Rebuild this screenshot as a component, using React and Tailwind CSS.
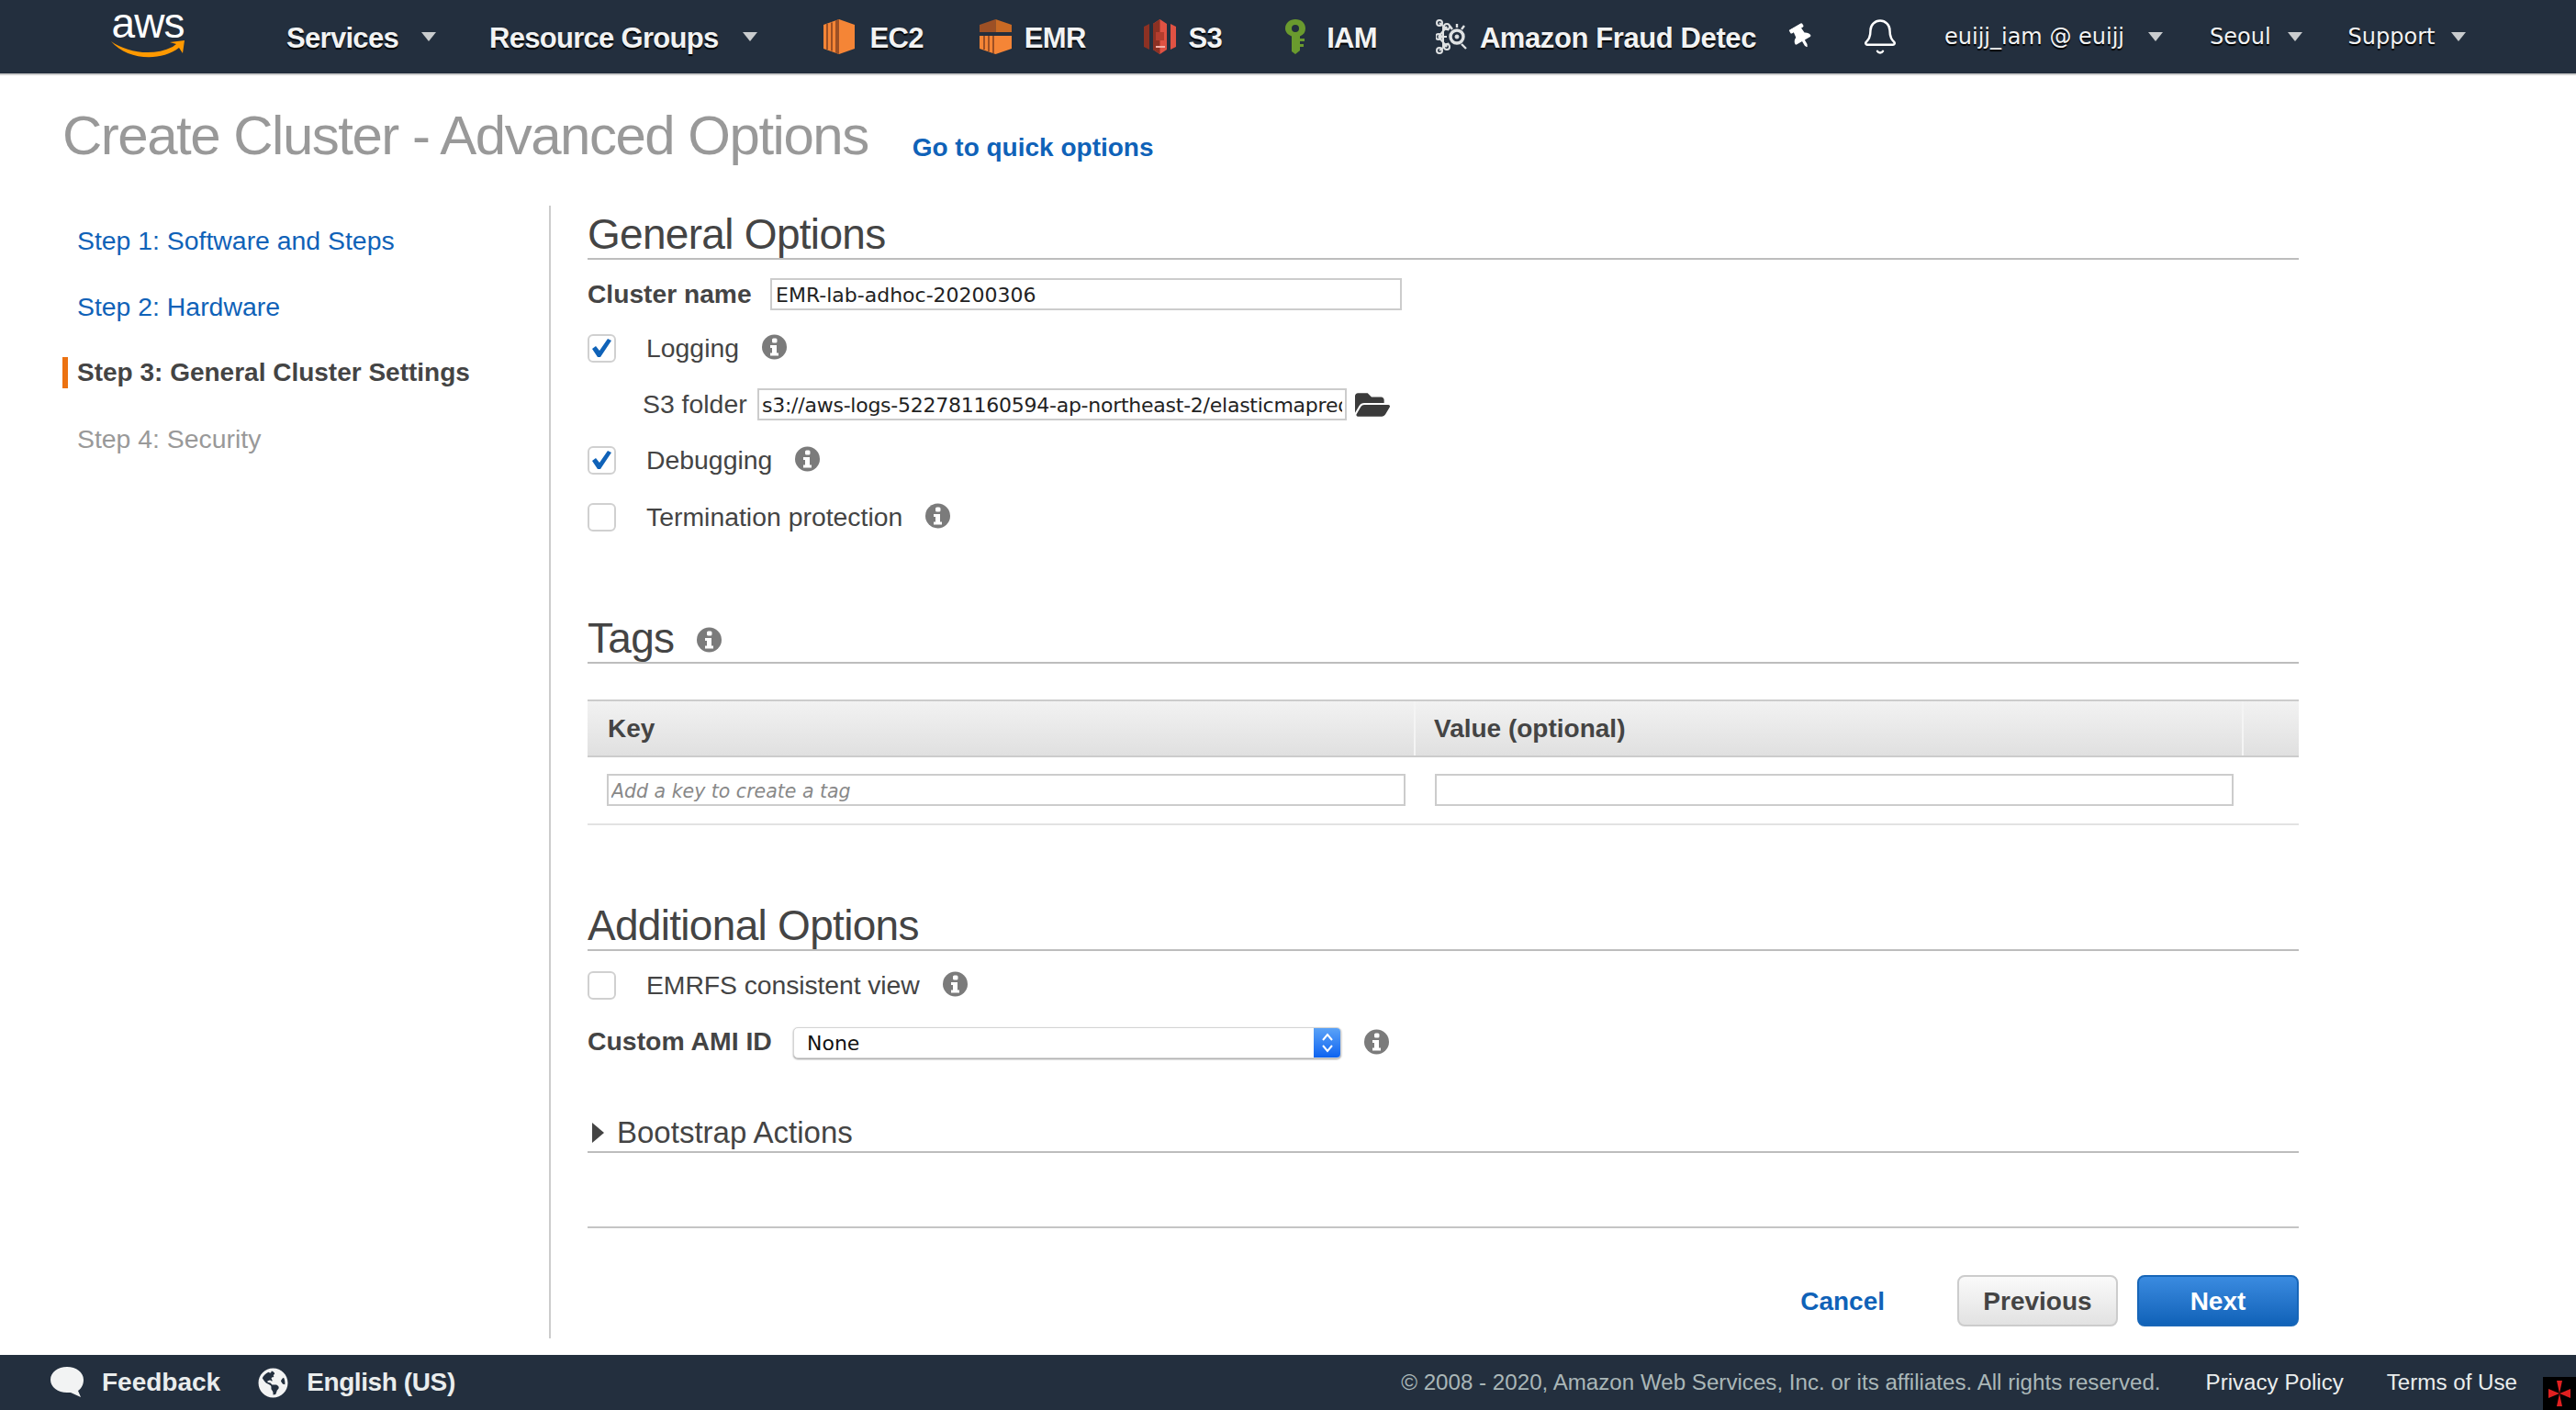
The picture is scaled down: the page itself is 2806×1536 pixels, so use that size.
import { Bell } from "lucide-react";
import { FaThumbtack, FaFolderOpen, FaGlobeAmericas } from "react-icons/fa";

const sans = "font-['Liberation_Sans',Arial,sans-serif]";
const dejavu = "font-['DejaVu_Sans',Verdana,sans-serif]";

function Caret() {
  return (
    <svg width="16" height="10" viewBox="0 0 16 10" className="shrink-0">
      <path d="M0 0 L16 0 L8 10 Z" fill="#c9ccce" />
    </svg>
  );
}

function InfoIcon({ className = "" }) {
  return (
    <svg width="27" height="28" viewBox="0 0 27 28" className={`shrink-0 ${className}`}>
      <circle cx="13.5" cy="14" r="13.5" fill="#7b7b7b" />
      <rect x="11" y="4.5" width="5.5" height="5" rx="1.5" fill="#fff" />
      <path d="M9 12 H16 V20.5 H18 V23.5 H9 V20.5 H11 V15 H9 Z" fill="#fff" />
    </svg>
  );
}

function CheckBox({ checked }) {
  return (
    <div className="w-[31px] h-[31px] shrink-0 rounded-[6px] border-2 border-[#d0d0d0] bg-white flex items-center justify-center">
      {checked ? (
        <svg width="23" height="21" viewBox="0 0 23 21">
          <path d="M1 11 L5 8 L9 13 L18 0 L22 2 L10 20 L7 20 Z" fill="#0f62b8" />
        </svg>
      ) : null}
    </div>
  );
}

function Ec2Icon() {
  return (
    <svg width="34" height="38" viewBox="0 0 34 38">
      <path d="M17 0 L34 6 V32 L17 38 L0 32 V6 Z" fill="#f58536" />
      <path d="M17 0 L13 1.5 V36.5 L17 38 Z" fill="#9d5025" />
      <path d="M3 5 H5 V33 H3 Z M8 3.5 H10 V34.5 H8 Z" fill="#9d5025" />
    </svg>
  );
}

function EmrIcon() {
  return (
    <svg width="35" height="38" viewBox="0 0 35 38">
      <path d="M17.5 0 L0 6 V14 H17.5 Z" fill="#9d5025" />
      <path d="M17.5 0 L35 6 V14 H17.5 Z" fill="#c96a24" />
      <path d="M0 18 H35 V32 L17.5 38 L0 32 Z" fill="#f58536" />
      <path d="M4 18 H6 V33 H4 Z M9 18 H11 V35 H9 Z M14 18 H16 V37 H14 Z" fill="#9d5025" />
    </svg>
  );
}

function S3Icon() {
  return (
    <svg width="35" height="38" viewBox="0 0 35 38">
      <path d="M0 8 L6 5 V33 L0 30 Z" fill="#8c3123" />
      <path d="M35 8 L29 5 V33 L35 30 Z" fill="#e05243" />
      <path d="M10 5 L17.5 0 L25 5 V33 L17.5 38 L10 33 Z" fill="#e05243" />
      <path d="M10 5 L17.5 0 V38 L10 33 Z" fill="#8c3123" />
      <rect x="13" y="14" width="9" height="9" fill="#b43d2e" />
      <rect x="13" y="29" width="10" height="2" fill="#f2b0a8" />
    </svg>
  );
}

function IamIcon() {
  return (
    <svg width="22" height="38" viewBox="0 0 22 38">
      <path
        d="M11 0 C17.5 0 22 4 22 10 C22 14 20 17 16 18.5 V21 H21 V24 H16 V27 H20 V30 H16 V34 L11 38 L7 35 V18.5 C3 17 0 14 0 10 C0 4 5 0 11 0 Z M11 6 A4 4 0 1 0 11 14 A4 4 0 1 0 11 6 Z"
        fill="#6a9a2e"
        fillRule="evenodd"
      />
    </svg>
  );
}

function FraudIcon() {
  return (
    <svg width="35" height="38" viewBox="0 0 35 38" fill="none" stroke="#dfe2e3">
      <circle cx="23" cy="19" r="7" strokeWidth="3.4" />
      <circle cx="23" cy="19" r="2" fill="#dfe2e3" strokeWidth="1" />
      <path d="M14 12 L4 4 M12 19 H3 M14 26 L4 34 M8 8 V30 M3 19 L12 8 M3 19 L12 30" strokeWidth="2" />
      <circle cx="4" cy="4" r="3" strokeWidth="2" />
      <circle cx="12" cy="8" r="3" strokeWidth="2" />
      <circle cx="3" cy="19" r="3" strokeWidth="2" />
      <circle cx="4" cy="34" r="3" strokeWidth="2" />
      <circle cx="12" cy="30" r="3" strokeWidth="2" />
      <path d="M23 5 V9 M31 7 L28 11 M15 7 L18 11 M33 32 L28 27" strokeWidth="2.4" />
    </svg>
  );
}

const navBold = "text-[31px] font-bold text-[#f2f3f3] [text-shadow:0_2px_1px_#000] whitespace-nowrap mt-[4px]";

function Shortcut({ icon, label, className, gap, track = "tracking-[-0.7px]" }) {
  return (
    <div className={`flex items-center ${className}`}>
      {icon}
      <span className={`${gap} ${track} ${navBold}`}>{label}</span>
    </div>
  );
}

function NavBar() {
  return (
    <nav className={`h-[82px] shrink-0 bg-[#232f3e] border-b-2 border-[#cfcfcf] flex items-center pl-[120px] ${sans}`}>
      <div className="w-[82px] h-[48px] shrink-0 flex flex-col items-center mt-[-2px]">
        <span className="text-[46px] leading-[30px] text-white mt-[-5px] tracking-[-1px]">aws</span>
        <svg width="82" height="20" viewBox="0 0 82 20" className="mt-[3px]">
          <path d="M1 2 C18 14 46 19 68 8 L72 5 L65 3 L81 1 L79 15 L75 9 C54 25 18 22 1 2 Z" fill="#ff9900" />
        </svg>
      </div>
      <span className={`ml-[110px] tracking-[-0.7px] ${navBold}`}>Services</span>
      <span className="ml-[25px]"><Caret /></span>
      <span className={`ml-[58px] tracking-[-0.7px] ${navBold}`}>Resource Groups</span>
      <span className="ml-[26px]"><Caret /></span>
      <Shortcut icon={<Ec2Icon />} label="EC2" gap="ml-[17px]" className="ml-[72px]" />
      <Shortcut icon={<EmrIcon />} label="EMR" gap="ml-[14px]" className="ml-[61px]" />
      <Shortcut icon={<S3Icon />} label="S3" gap="ml-[14px]" className="ml-[63px]" />
      <Shortcut icon={<IamIcon />} label="IAM" gap="ml-[23px]" className="ml-[69px]" />
      <Shortcut icon={<FraudIcon />} label="Amazon Fraud Detec" gap="ml-[13px]" className="ml-[64px]" track="tracking-[-0.4px]" />
      <FaThumbtack className="ml-[36px] text-white rotate-[-30deg] shrink-0" size={26} />
      <Bell className="ml-[52px] text-white shrink-0" size={42} strokeWidth={1.4} />
      <div className={`flex items-center text-[24px] text-[#f2f3f3] [text-shadow:0_2px_1px_#000] ${dejavu}`}>
        <span className="ml-[49px] whitespace-nowrap">euijj_iam @ euijj</span>
        <span className="ml-[26px]"><Caret /></span>
        <span className="ml-[51px]">Seoul</span>
        <span className="ml-[18px]"><Caret /></span>
        <span className="ml-[50px]">Support</span>
        <span className="ml-[18px]"><Caret /></span>
      </div>
    </nav>
  );
}

function SideBar() {
  return (
    <aside className="w-[600px] shrink-0 border-r-2 border-[#cccccc] pt-[2px] text-[28.4px]">
      <div className="h-[72px] pl-[84px] flex items-center text-[#0f62b8]">Step 1: Software and Steps</div>
      <div className="h-[72px] pl-[84px] flex items-center text-[#0f62b8]">Step 2: Hardware</div>
      <div className="h-[72px] pl-[68px] flex items-center font-bold text-[#444444] text-[28px]">
        <div className="w-[6px] h-[34px] bg-[#ec7211] mr-[10px]" />
        Step 3: General Cluster Settings
      </div>
      <div className="h-[72px] pl-[84px] flex items-center text-[#999999]">Step 4: Security</div>
    </aside>
  );
}

function SectionHeading({ children, className = "" }) {
  return (
    <div className={`h-[59px] border-b-2 border-[#bdbdbd] flex items-end text-[46px] tracking-[-0.7px] leading-[52px] text-[#444444] ${className}`}>
      {children}
    </div>
  );
}

function CheckRow({ label, checked, className = "" }) {
  return (
    <div className={`h-[31px] flex items-center text-[28.4px] text-[#444444] ${className}`}>
      <CheckBox checked={checked} />
      <span className="ml-[33px]">{label}</span>
      <InfoIcon className="ml-[25px] mt-[-3px]" />
    </div>
  );
}

const inputClass = `h-[35px] border-2 border-[#cccccc] bg-white px-[3px] pt-[2px] text-[22px] text-[#222222] outline-none ${dejavu}`;

function Content() {
  return (
    <section className="ml-[40px] w-[1864px] shrink-0">
      <SectionHeading>General Options</SectionHeading>
      <div className="mt-[20px] h-[35px] flex items-center">
        <span className="text-[28.2px] font-bold text-[#444444] w-[199px]">Cluster name</span>
        <input readOnly value="EMR-lab-adhoc-20200306" className={`${inputClass} w-[688px] pl-[4px]`} />
      </div>
      <CheckRow label="Logging" checked className="mt-[26px]" />
      <div className="mt-[28px] h-[35px] flex items-center pl-[60px]">
        <span className="text-[28.4px] text-[#444444] w-[125px]">S3 folder</span>
        <input
          readOnly
          value="s3://aws-logs-522781160594-ap-northeast-2/elasticmapreduce/"
          className={`${inputClass} w-[642px] tracking-[-0.25px]`}
        />
        <FaFolderOpen className="ml-[9px] text-[#3b3b3b]" size={38} />
      </div>
      <CheckRow label="Debugging" checked className="mt-[28px]" />
      <CheckRow label="Termination protection" className="mt-[31px]" />

      <SectionHeading className="mt-[85px]">
        Tags
        <InfoIcon className="ml-[25px] mb-[10px]" />
      </SectionHeading>
      <div className="mt-[39px] h-[63px] border-y-2 border-[#cccccc] bg-linear-to-b from-[#f2f2f2] to-[#e0e0e0] flex text-[28px] font-bold text-[#444444]">
        <div className="w-[902px] border-r-2 border-[#f4f4f4] pl-[22px] flex items-center">Key</div>
        <div className="w-[902px] border-r-2 border-[#f4f4f4] pl-[20px] flex items-center">Value (optional)</div>
      </div>
      <div className="h-[74px] border-b-2 border-[#e2e2e2] flex pt-[18px]">
        <input
          placeholder="Add a key to create a tag"
          className={`${inputClass} ml-[21px] w-[870px] placeholder:italic placeholder:text-[20.5px] placeholder:text-[#888888]`}
        />
        <input className={`${inputClass} ml-[32px] w-[870px]`} />
      </div>

      <SectionHeading className="mt-[78px]">Additional Options</SectionHeading>
      <CheckRow label="EMRFS consistent view" className="mt-[22px] tracking-[-0.1px]" />
      <div className="mt-[30px] h-[34px] flex items-center">
        <span className="text-[28.4px] font-bold text-[#444444] w-[224px] mt-[-3px]">Custom AMI ID</span>
        <div className={`w-[597px] h-[34px] rounded-[5px] border border-[#d4d4d4] shadow-[0_1px_2px_#999999] bg-white flex items-center justify-between overflow-hidden text-[22px] text-[#111111] ${dejavu}`}>
          <span className="ml-[14px]">None</span>
          <div className="w-[29px] h-full bg-linear-to-b from-[#5aa2f7] to-[#0a62f0] flex items-center justify-center">
            <svg width="14" height="24" viewBox="0 0 14 24" fill="none" stroke="#ffffff" strokeWidth="2">
              <path d="M2 9 L7 3 L12 9 M2 15 L7 21 L12 15" />
            </svg>
          </div>
        </div>
        <InfoIcon className="ml-[25px] mt-[-3px]" />
      </div>

      <div className="mt-[44px] h-[59px] border-b-2 border-[#bdbdbd] flex items-end text-[33px] leading-[41px] text-[#444444]">
        <div className="h-[41px] flex items-center">
          <svg width="13" height="22" viewBox="0 0 13 22" className="ml-[5px] mr-[14px]">
            <path d="M0 0 L13 11 L0 22 Z" fill="#444444" />
          </svg>
          Bootstrap Actions
        </div>
      </div>

      <div className="mt-[80px] border-t-2 border-[#c4c4c4]" />
      <div className="mt-[51px] flex items-center justify-end text-[28px] font-bold">
        <span className="text-[#0f62b8] mt-[2px]">Cancel</span>
        <button
          type="button"
          className="ml-[79px] w-[175px] h-[56px] pt-[2px] rounded-[8px] border-2 border-[#cccccc] bg-linear-to-b from-[#fafafa] to-[#e2e2e2] text-[#444444]"
        >
          Previous
        </button>
        <button
          type="button"
          className="ml-[21px] w-[176px] h-[56px] pt-[2px] rounded-[8px] border-2 border-[#1766b8] bg-linear-to-b from-[#3a8be0] to-[#0f62b8] text-white"
        >
          Next
        </button>
      </div>
    </section>
  );
}

function Footer() {
  return (
    <footer className="relative h-[60px] shrink-0 bg-[#232f3e] flex items-center text-[24.15px]">
      <svg width="36" height="34" viewBox="0 0 36 34" className="ml-[55px] shrink-0">
        <path d="M18 0 C28 0 36 6 36 14 C36 20 33 24 30 26 L33 33 L22 28 C21 28 19 28 18 28 C8 28 0 22 0 14 C0 6 8 0 18 0 Z" fill="#f2f3f3" />
      </svg>
      <span className="ml-[20px] font-bold text-[#eaeded] text-[28px]">Feedback</span>
      <FaGlobeAmericas className="ml-[41px] text-[#f2f3f3] shrink-0" size={33} />
      <span className="ml-[20px] font-bold text-[#eaeded] text-[28px] tracking-[-0.4px]">English (US)</span>
      <div className="ml-auto flex items-center mr-[64px]">
        <span className="text-[#aab7b8]">© 2008 - 2020, Amazon Web Services, Inc. or its affiliates. All rights reserved.</span>
        <span className="ml-[49px] text-[#eaeded]">Privacy Policy</span>
        <span className="ml-[47px] text-[#eaeded]">Terms of Use</span>
      </div>
      <div className="absolute right-0 bottom-0 w-[36px] h-[36px] bg-black flex items-center justify-center">
        <svg width="24" height="28" viewBox="0 0 24 28">
          <path d="M9 0 H15 L12 14 Z M9 28 H15 L12 14 Z M0 9 V19 L12 14 Z M24 9 V19 L12 14 Z" fill="#e02020" />
        </svg>
      </div>
    </footer>
  );
}

export default function App() {
  return (
    <div className={`w-[2806px] h-[1536px] flex flex-col bg-white overflow-hidden ${sans}`}>
      <NavBar />
      <div className="h-[142px] shrink-0 pl-[68px] flex">
        <h1 className="mt-[30px] text-[60px] tracking-[-1.5px] leading-[72px] text-[#999999] whitespace-nowrap">
          Create Cluster - Advanced Options
        </h1>
        <a className="ml-[48px] mt-[59px] text-[28px] leading-[40px] font-bold text-[#0f62b8] whitespace-nowrap">
          Go to quick options
        </a>
      </div>
      <main className="h-[1234px] shrink-0 flex">
        <SideBar />
        <Content />
      </main>
      <div className="flex-1" />
      <Footer />
    </div>
  );
}
